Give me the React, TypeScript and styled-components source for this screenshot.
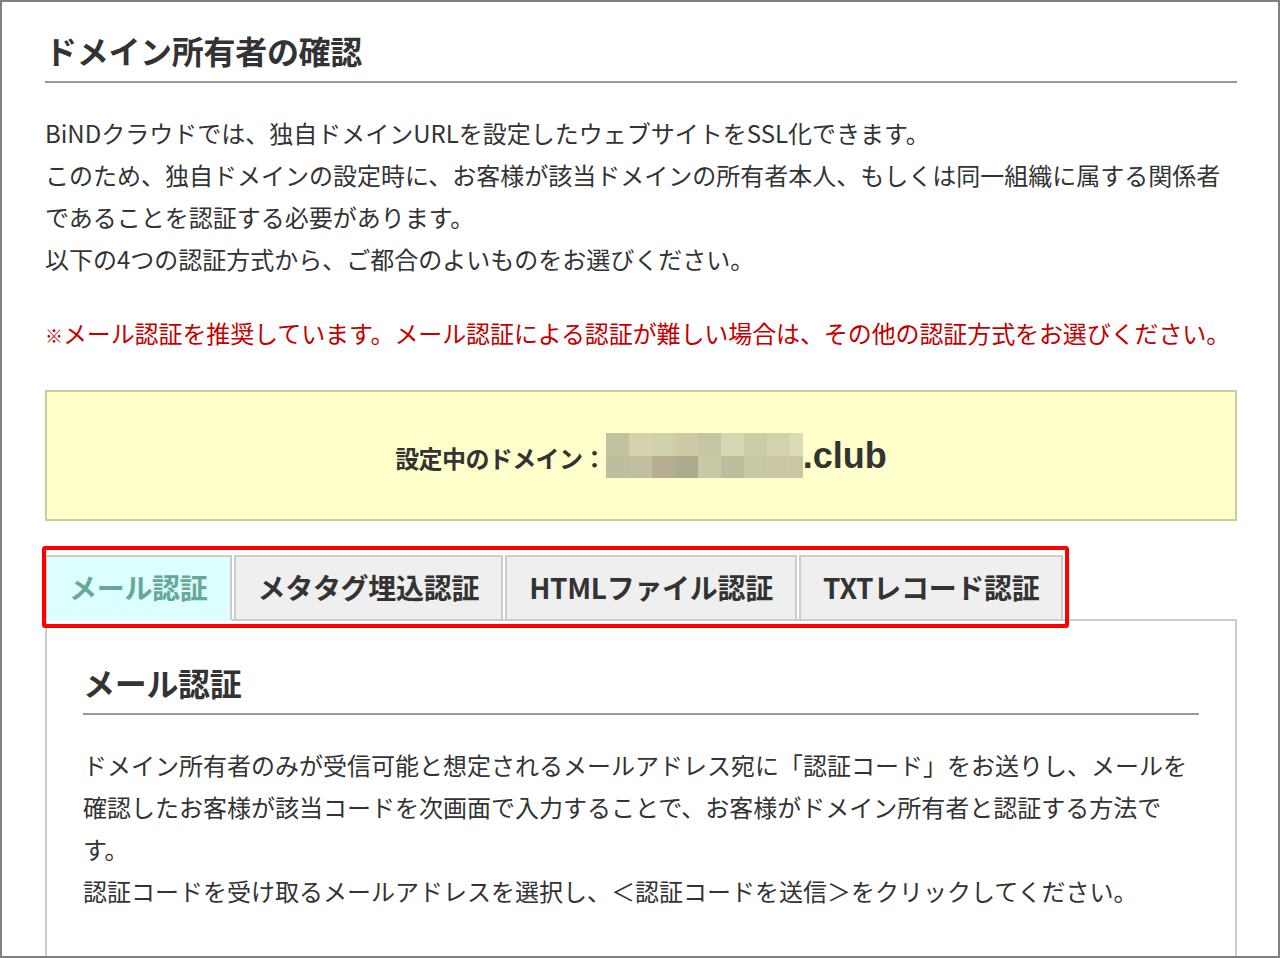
import React from "react";
import styled, { createGlobalStyle } from "styled-components";

const GlobalStyle = createGlobalStyle`
  html, body { margin: 0; padding: 0; background: #ffffff; }
  * { box-sizing: border-box; }
  body {
    font-family: "Noto Sans CJK JP", "Noto Sans", sans-serif;
    color: #333333;
  }
`;

const Page = styled.div`
  width: 1280px;
  height: 958px;
  border: 2px solid #808080;
  padding: 28px 41px 0 43px;
  overflow: hidden;
  background: #ffffff;
`;

const Title = styled.h1`
  margin: 0;
  font-size: 32px;
  font-weight: 700;
  line-height: 40px;
  color: #333333;
  padding-bottom: 11px;
  border-bottom: 2px solid #999999;
  letter-spacing: -0.3px;
`;

const Paragraph = styled.p`
  margin: 29px 0 0;
  font-size: 24px;
  line-height: 42px;
  color: #333333;
`;

const Notice = styled.p`
  margin: 32px 0 0;
  font-size: 24px;
  line-height: 42px;
  color: #c40000;
  white-space: nowrap;
  letter-spacing: -0.1px;
`;

const Mark = styled.span`
  font-size: 18px;
  font-weight: 700;
`;

const DomainBox = styled.div`
  margin-top: 34px;
  height: 131px;
  border: 2px solid #cccc99;
  background: #ffffcc;
  display: flex;
  align-items: center;
  justify-content: center;
`;

const DomainLabel = styled.span`
  font-size: 24px;
  font-weight: 700;
  color: #333333;
  margin-top: 4px;
  letter-spacing: -0.6px;
`;

const DomainTld = styled.span`
  font-family: "Liberation Sans", "Noto Sans", sans-serif;
  font-size: 36px;
  font-weight: 700;
  color: #333333;
  line-height: 1;
`;

const TabsArea = styled.div`
  position: relative;
  margin-top: 34px;
`;

const TabList = styled.div`
  display: flex;
  gap: 2px;
  position: relative;
  z-index: 1;
  margin-bottom: -2px;
`;

const Tab = styled.div<{ $active?: boolean }>`
  height: 66px;
  padding: 0 22px 3px;
  display: flex;
  align-items: center;
  border: 2px solid #cccccc;
  border-bottom-color: ${(p) => (p.$active ? "#dcfefe" : "#cccccc")};
  background: ${(p) => (p.$active ? "#dcfefe" : "#efefef")};
  color: ${(p) => (p.$active ? "#68a897" : "#333333")};
  font-size: 28px;
  font-weight: 700;
  letter-spacing: -0.3px;
  white-space: nowrap;
`;

const Highlight = styled.div`
  position: absolute;
  left: -3px;
  top: -9px;
  width: 1027px;
  height: 82px;
  border: 4px solid #ff0000;
  border-radius: 3px;
  z-index: 2;
  pointer-events: none;
`;

const Panel = styled.div`
  border: 2px solid #cccccc;
  padding: 41px 36px 60px;
  background: #ffffff;
`;

const blurColors = [
  ["#c3c2a0", "#d6d2ad", "#d1d0ac", "#cfcaa5", "#c5c4a3", "#d6d7b2", "#cdcca8", "#d2d2ae", "#dcdcb8"],
  ["#bebe9e", "#c0bf9f", "#b6ae92", "#abac8e", "#c9c9a7", "#bdbc9c", "#c7c7a6", "#cdc7a6", "#c7c7a6"],
];

const BlurredName: React.FC = () => (
  <svg width="197" height="45" viewBox="0 0 197 45" aria-hidden="true" style={{ display: "block" }}>
    {blurColors.map((row, r) =>
      row.map((c, i) => (
        <rect
          key={`${r}-${i}`}
          x={i * 23}
          y={r === 0 ? 0 : 23}
          width={i === 8 ? 13 : 23}
          height={r === 0 ? 23 : 22}
          fill={c}
        />
      ))
    )}
  </svg>
);

const tabs = ["メール認証", "メタタグ埋込認証", "HTMLファイル認証", "TXTレコード認証"];

export default function App() {
  return (
    <>
      <GlobalStyle />
      <Page>
        <Title>ドメイン所有者の確認</Title>
        <Paragraph>
          BiNDクラウドでは、独自ドメインURLを設定したウェブサイトをSSL化できます。
          <br />
          このため、独自ドメインの設定時に、お客様が該当ドメインの所有者本人、もしくは同一組織に属する関係者
          <br />
          であることを認証する必要があります。
          <br />
          以下の4つの認証方式から、ご都合のよいものをお選びください。
        </Paragraph>
        <Notice>
          <Mark>※</Mark>メール認証を推奨しています。メール認証による認証が難しい場合は、その他の認証方式をお選びください。
        </Notice>
        <DomainBox>
          <DomainLabel>設定中のドメイン：</DomainLabel>
          <BlurredName />
          <DomainTld>.club</DomainTld>
        </DomainBox>
        <TabsArea>
          <TabList>
            {tabs.map((t, i) => (
              <Tab key={t} $active={i === 0}>
                {t}
              </Tab>
            ))}
          </TabList>
          <Highlight />
          <Panel>
            <Title>メール認証</Title>
            <Paragraph>
              ドメイン所有者のみが受信可能と想定されるメールアドレス宛に「認証コード」をお送りし、メールを
              <br />
              確認したお客様が該当コードを次画面で入力することで、お客様がドメイン所有者と認証する方法で
              <br />
              す。
              <br />
              認証コードを受け取るメールアドレスを選択し、＜認証コードを送信＞をクリックしてください。
            </Paragraph>
          </Panel>
        </TabsArea>
      </Page>
    </>
  );
}
